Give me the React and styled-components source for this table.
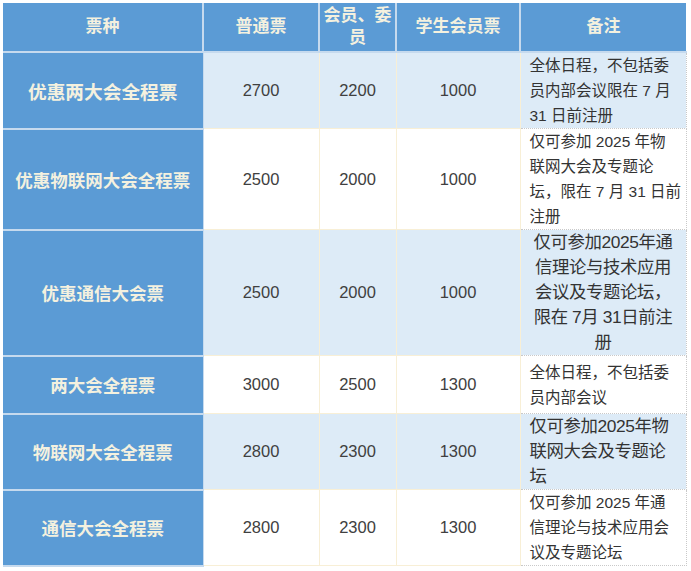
import React from "react";
import styled, { createGlobalStyle } from "styled-components";

const Global = createGlobalStyle`
  html, body { margin: 0; padding: 0; background: #ffffff; }
  body { font-family: "Liberation Sans", "Noto Sans CJK SC", sans-serif; }
`;

const Page = styled.div`
  padding: 3px 5px 0 3px;
`;

const Table = styled.table`
  border-collapse: collapse;
  table-layout: fixed;
  width: 683px;
`;

const HeadRow = styled.tr`
  height: 49px;
`;

const Row = styled.tr`
  height: ${(p) => p.$h}px;
  background: ${(p) => (p.$alt ? "#ddebf7" : "#ffffff")};
`;

const HeadCell = styled.th`
  background: #5b9bd5;
  color: #f4f1df;
  font-family: "Liberation Sans", "Noto Sans CJK SC", sans-serif;
  font-size: 17px;
  font-weight: 700;
  line-height: 22px;
  text-align: center;
  vertical-align: middle;
  padding: 0 1px;
  border: 2px solid #c6daee;
  border-top: none;
  &:first-child { border-left: none; }
  &:last-child { border-right: none; }
`;

const NameCell = styled.td`
  background: #5b9bd5;
  color: #f4f1df;
  font-size: ${(p) => p.$size || 17.5}px;
  font-weight: 700;
  text-align: center;
  vertical-align: middle;
  padding: 0;
  border-bottom: 2px solid #c6daee;
  border-right: 1px solid #c6daee;
  white-space: nowrap;
`;

const NumCell = styled.td`
  color: #404040;
  font-size: 16.5px;
  text-align: center;
  vertical-align: middle;
  padding: 0;
  border: 1px solid #f8efd6;
`;

const NoteCell = styled.td`
  color: #333333;
  font-size: ${(p) => (p.$big ? "17.4px" : "15.5px")};
  letter-spacing: ${(p) => (p.$big ? "-0.4px" : "0")};
  line-height: 25px;
  text-align: ${(p) => (p.$center ? "center" : "left")};
  vertical-align: middle;
  padding: 0 2px 0 ${(p) => (p.$center ? "2px" : "9px")};
  white-space: nowrap;
  overflow: hidden;
  border: 1px dotted #c9c9c9;
`;

const Line = styled.div``;

const rows = [
  { name: "优惠两大会全程票", size: 18.7, a: "2700", b: "2200", c: "1000", h: 75, note: ["全体日程，不包括委", "员内部会议限在 7 月", "31 日前注册"] },
  { name: "优惠物联网大会全程票", a: "2500", b: "2000", c: "1000", h: 101, note: ["仅可参加 2025 年物", "联网大会及专题论", "坛，限在 7 月 31 日前", "注册"] },
  { name: "优惠通信大会票", a: "2500", b: "2000", c: "1000", h: 126, center: true, big: true, note: ["仅可参加2025年通", "信理论与技术应用", "会议及专题论坛，", "限在 7月 31日前注", "册"] },
  { name: "两大会全程票", a: "3000", b: "2500", c: "1300", h: 58, note: ["全体日程，不包括委", "员内部会议"] },
  { name: "物联网大会全程票", a: "2800", b: "2300", c: "1300", h: 76, big: true, note: ["仅可参加2025年物", "联网大会及专题论", "坛"] },
  { name: "通信大会全程票", a: "2800", b: "2300", c: "1300", h: 75, note: ["仅可参加 2025 年通", "信理论与技术应用会", "议及专题论坛"] },
];

export default function App() {
  return (
    <Page>
      <Global />
      <Table>
        <colgroup>
          <col style={{ width: 200 }} />
          <col style={{ width: 116 }} />
          <col style={{ width: 77 }} />
          <col style={{ width: 124 }} />
          <col style={{ width: 166 }} />
        </colgroup>
        <thead>
          <HeadRow>
            <HeadCell>票种</HeadCell>
            <HeadCell>普通票</HeadCell>
            <HeadCell>会员、委员</HeadCell>
            <HeadCell>学生会员票</HeadCell>
            <HeadCell>备注</HeadCell>
          </HeadRow>
        </thead>
        <tbody>
          {rows.map((r, i) => (
            <Row key={r.name} $h={r.h} $alt={i % 2 === 0}>
              <NameCell $size={r.size}>{r.name}</NameCell>
              <NumCell>{r.a}</NumCell>
              <NumCell>{r.b}</NumCell>
              <NumCell>{r.c}</NumCell>
              <NoteCell $center={r.center} $big={r.big}>
                {r.note.map((l, j) => (
                  <Line key={j}>{l}</Line>
                ))}
              </NoteCell>
            </Row>
          ))}
        </tbody>
      </Table>
    </Page>
  );
}
